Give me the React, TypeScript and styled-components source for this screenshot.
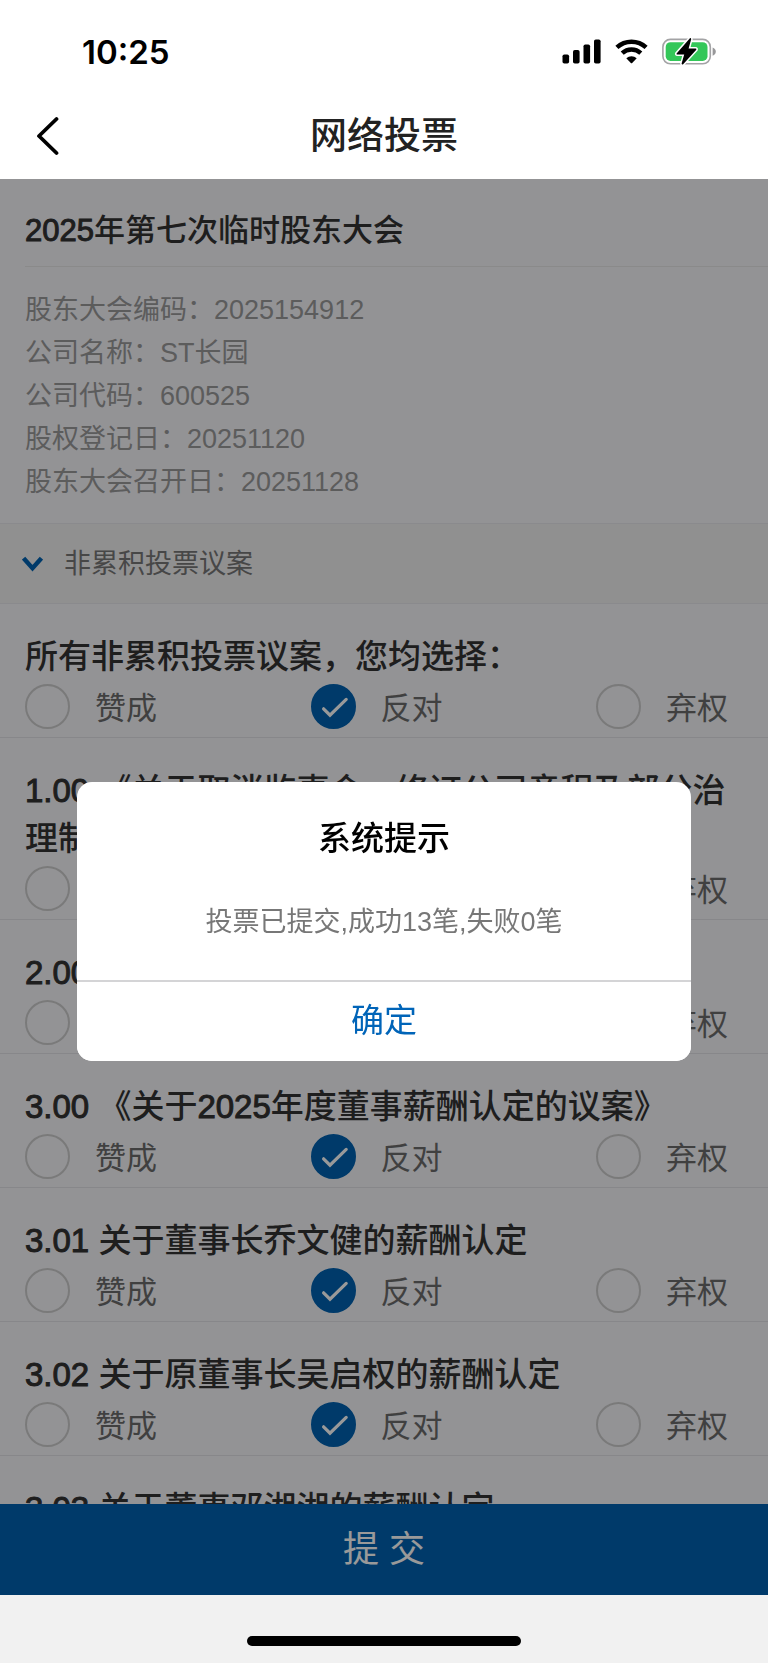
import React, { useState } from "react";
import styled, { createGlobalStyle } from "styled-components";

const GlobalStyle = createGlobalStyle`
  * { box-sizing: border-box; }
  body {
    margin: 0;
    background: #f1f1f1;
    font-family: "Liberation Sans", "Noto Sans CJK SC", sans-serif;
    color: #333;
  }
  button, input { font-family: inherit; margin: 0; }
`;

const Screen = styled.div`
  display: flex;
  flex-direction: column;
  height: 100vh;
`;

const TopBar = styled.header`
  flex: none;
  background: #fff;
`;

const StatusBar = styled.div`
  display: flex;
  align-items: center;
  justify-content: space-between;
  height: 91px;
  padding: 12px 51px 0 82px;
`;

const Clock = styled.time`
  font-family: Inter, sans-serif;
  font-size: 33px;
  font-weight: 600;
  line-height: 40px;
  color: #000;
`;

const StatusIcons = styled.div`
  display: flex;
  align-items: center;
  gap: 14px;
`;

const NavBar = styled.div`
  display: grid;
  grid-template-columns: 96px 1fr 96px;
  align-items: center;
  height: 88px;
  padding-top: 2px;
`;

const BackButton = styled.button`
  display: flex;
  height: 80px;
  padding: 0 0 0 35px;
  align-items: center;
  border: 0;
  background: none;
`;

const NavTitle = styled.h1`
  margin: 0;
  padding-top: 2px;
  font-size: 37px;
  font-weight: 500;
  line-height: 56px;
  text-align: center;
  color: #222;
`;

const Stage = styled.div`
  position: relative;
  display: flex;
  flex: 1;
  flex-direction: column;
  min-height: 0;
`;

const Content = styled.div`
  position: relative;
  display: flex;
  flex: 1;
  flex-direction: column;
  min-height: 0;
`;

const Scroller = styled.main`
  flex: 1;
  min-height: 0;
  overflow-y: auto;
  scrollbar-width: none;
  background: #f5f5f9;
`;

const MeetingTitle = styled.h2`
  margin: 0 0 0 25px;
  padding: 28px 0 11px;
  border-bottom: 1px solid #e6e6e6;
  font-size: 31px;
  font-weight: 500;
  line-height: 48px;
`;

const Latin = styled.span`
  -webkit-text-stroke: 1px currentColor;
`;

const InfoList = styled.dl`
  margin: 0;
  padding: 22px 25px 19px;
  font-size: 27px;
  line-height: 43px;
  color: #999;
`;

const InfoRow = styled.div`
  display: flex;
  dt, dd { margin: 0; }
`;

const SectionButton = styled.button`
  display: flex;
  align-items: center;
  gap: 21px;
  width: 100%;
  height: 81px;
  padding: 0 22px;
  border: solid #e6e6ec;
  border-width: 1px 0;
  background: #f0f0f0;
  font-size: 27px;
  line-height: 40px;
  color: #777;
`;

const Proposal = styled.fieldset`
  min-width: 0;
  margin: 0;
  padding: 29px 0 8px 25px;
  border: 0;
  border-bottom: 1px solid #e2e2e6;
`;

const ProposalTitle = styled.legend`
  float: left;
  width: 100%;
  padding: 0 20px 0 0;
  font-size: 33px;
  font-weight: 500;
  line-height: 48px;
`;

const Options = styled.div`
  clear: both;
  display: flex;
  justify-content: space-between;
  padding: 3px 40px 0 0;
`;

const Option = styled.label`
  display: flex;
  align-items: flex-start;
  gap: 25px;
  height: 45px;
  font-size: 31px;
  line-height: 50px;
  color: #6c6c6c;
`;

const RadioBox = styled.span`
  display: grid;
  width: 45px;
  height: 45px;
  > * { grid-area: 1 / 1; }
  svg { pointer-events: none; }
`;

const Radio = styled.input`
  appearance: none;
  width: 45px;
  height: 45px;
  border: 2px solid #ccc;
  border-radius: 50%;
  &:checked {
    border-color: #0062b1;
    background: #0062b1;
  }
`;

const SubmitButton = styled.button`
  flex: none;
  height: 91px;
  border: 0;
  background: #0062b1;
  font-size: 36px;
  line-height: 54px;
  color: #fff;
`;

const HomeArea = styled.footer`
  display: flex;
  flex: none;
  justify-content: center;
  align-items: flex-start;
  height: 68px;
  padding-top: 41px;
  background: #f1f1f1;
`;

const HomeIndicator = styled.div`
  width: 274px;
  height: 10px;
  border-radius: 5px;
  background: #000;
`;

const Dim = styled.div`
  position: absolute;
  inset: 0;
  background: rgba(0, 0, 0, 0.4);
`;

const DialogLayer = styled.div`
  position: absolute;
  inset: 0;
  display: flex;
  align-items: center;
  justify-content: center;
`;

const Dialog = styled.section`
  width: 80%;
  overflow: hidden;
  border-radius: 15px;
  background: #fff;
  text-align: center;
`;

const DialogTitle = styled.h2`
  margin: 0;
  padding: 33px 30px 15px;
  font-size: 33px;
  font-weight: 500;
  line-height: 48px;
  color: #000;
`;

const DialogText = styled.p`
  margin: 0;
  padding: 24px 30px 38px;
  font-size: 27px;
  line-height: 40px;
  color: #777;
`;

const ConfirmButton = styled.button`
  display: block;
  width: 100%;
  height: 81px;
  border: 0;
  border-top: 2px solid #d4d4d6;
  background: #fff;
  font-size: 33px;
  line-height: 48px;
  color: #0064b8;
`;

const SignalIcon = () => (
  <svg width="39" height="25" viewBox="0 0 39 25" fill="#000" aria-hidden="true">
    <rect x="0.5" y="15.5" width="6.6" height="9" rx="1.8" />
    <rect x="11" y="11" width="6.6" height="13.5" rx="1.8" />
    <rect x="21.5" y="5.5" width="6.6" height="19" rx="1.8" />
    <rect x="32" y="0.5" width="6.6" height="24" rx="1.8" />
  </svg>
);

const WifiIcon = () => (
  <svg width="33" height="25" viewBox="0 0 33 25" fill="none" aria-hidden="true">
    <path d="M1.9 8.4A21.5 21.5 0 0 1 31.1 8.4" stroke="#000" strokeWidth="4.5" />
    <path d="M7.2 14.2A13.6 13.6 0 0 1 25.8 14.2" stroke="#000" strokeWidth="4.4" />
    <path d="M11.3 19.2A8 8 0 0 1 21.7 19.2L17.2 23.9Q16.5 24.5 15.8 23.9Z" fill="#000" />
  </svg>
);

const BatteryIcon = () => (
  <svg width="55" height="29" viewBox="0 0 55 29" aria-hidden="true">
    <rect x="0.9" y="2.4" width="47.4" height="24.4" rx="7.5" fill="none" stroke="#a3a3a5" strokeWidth="1.6" />
    <path d="M50.6 10.4Q53.8 11.6 53.8 14.6Q53.8 17.6 50.6 18.8Z" fill="#98989a" />
    <rect x="3.7" y="5.2" width="41.8" height="18.8" rx="4.8" fill="#34c759" />
    <path
      d="M27.9 1.2L14.6 16.4Q14.1 17.4 15.2 17.4H22.2L19.6 26.5Q20 28.3 21.4 27L34.3 12.7Q34.7 11.6 33.6 11.6H26.6L29.2 2.2Q29 0.6 27.9 1.2Z"
      fill="#000"
      stroke="#fff"
      strokeWidth="3"
      paintOrder="stroke"
    />
  </svg>
);

const BackIcon = () => (
  <svg width="24" height="40" viewBox="0 0 24 40" fill="none" aria-hidden="true">
    <path d="M21.5 3L4 20L21.5 37" stroke="#000" strokeWidth="3.8" strokeLinecap="round" strokeLinejoin="round" />
  </svg>
);

const ChevronIcon = () => (
  <svg width="21" height="16" viewBox="0 0 21 16" fill="none" aria-hidden="true">
    <path d="M1.6 2.2L10.5 12.2L19.4 2.2" stroke="#0062b1" strokeWidth="4.4" />
  </svg>
);

const CheckIcon = () => (
  <svg width="45" height="45" viewBox="0 0 45 45" fill="none" aria-hidden="true">
    <path d="M12.6 24.8L19 31.2L35.2 15.4" stroke="#fff" strokeWidth="3.2" strokeLinecap="round" />
  </svg>
);

const choices = ["赞成", "反对", "弃权"];

const info = [
  ["股东大会编码：", "2025154912"],
  ["公司名称：", "ST长园"],
  ["公司代码：", "600525"],
  ["股权登记日：", "20251120"],
  ["股东大会召开日：", "20251128"],
];

const proposals = [
  "所有非累积投票议案，您均选择：",
  "1.00 《关于取消监事会、修订公司章程及部分治理制度的议案》",
  "2.00 《关于续聘会计师事务所的议案》",
  "3.00 《关于2025年度董事薪酬认定的议案》",
  "3.01 关于董事长乔文健的薪酬认定",
  "3.02 关于原董事长吴启权的薪酬认定",
  "3.03 关于董事邓湘湘的薪酬认定",
];

// Digits get the same visual weight as the medium Chinese glyphs.
const Mixed = ({ text }: { text: string }) => (
  <>
    {text.split(/([\d.]+)/).map((part, i) => (i % 2 ? <Latin key={i}>{part}</Latin> : part))}
  </>
);

export default function App() {
  const [votes, setVotes] = useState<string[]>(proposals.map(() => "反对"));
  const [expanded, setExpanded] = useState(true);
  const [dialogOpen, setDialogOpen] = useState(true);

  const vote = (index: number, choice: string) =>
    setVotes(votes.map((v, i) => (index === 0 || i === index ? choice : v)));

  return (
    <Screen lang="zh-CN">
      <GlobalStyle />
      <TopBar>
        <StatusBar>
          <Clock>10:25</Clock>
          <StatusIcons>
            <SignalIcon />
            <WifiIcon />
            <BatteryIcon />
          </StatusIcons>
        </StatusBar>
        <NavBar>
          <BackButton type="button" aria-label="返回">
            <BackIcon />
          </BackButton>
          <NavTitle>网络投票</NavTitle>
        </NavBar>
      </TopBar>

      <Stage>
        <Content>
          <Scroller>
            <MeetingTitle>
              <Mixed text="2025年第七次临时股东大会" />
            </MeetingTitle>
            <InfoList>
              {info.map(([label, value]) => (
                <InfoRow key={label}>
                  <dt>{label}</dt>
                  <dd>{value}</dd>
                </InfoRow>
              ))}
            </InfoList>
            <SectionButton type="button" aria-expanded={expanded} onClick={() => setExpanded(!expanded)}>
              <ChevronIcon />
              非累积投票议案
            </SectionButton>
            {expanded &&
              proposals.map((title, index) => (
                <Proposal key={title}>
                  <ProposalTitle>
                    <Mixed text={title} />
                  </ProposalTitle>
                  <Options>
                    {choices.map((choice) => (
                      <Option key={choice}>
                        <RadioBox>
                          <Radio
                            type="radio"
                            name={`proposal-${index}`}
                            checked={votes[index] === choice}
                            onChange={() => vote(index, choice)}
                          />
                          {votes[index] === choice && <CheckIcon />}
                        </RadioBox>
                        {choice}
                      </Option>
                    ))}
                  </Options>
                </Proposal>
              ))}
          </Scroller>
          <SubmitButton type="button" onClick={() => setDialogOpen(true)}>
            提 交
          </SubmitButton>
          {dialogOpen && <Dim />}
        </Content>
        <HomeArea>
          <HomeIndicator />
        </HomeArea>
        {dialogOpen && (
          <DialogLayer>
            <Dialog role="dialog" aria-modal="true" aria-labelledby="dialog-title">
              <DialogTitle id="dialog-title">系统提示</DialogTitle>
              <DialogText>投票已提交,成功13笔,失败0笔</DialogText>
              <ConfirmButton type="button" onClick={() => setDialogOpen(false)}>
                确定
              </ConfirmButton>
            </Dialog>
          </DialogLayer>
        )}
      </Stage>
    </Screen>
  );
}
